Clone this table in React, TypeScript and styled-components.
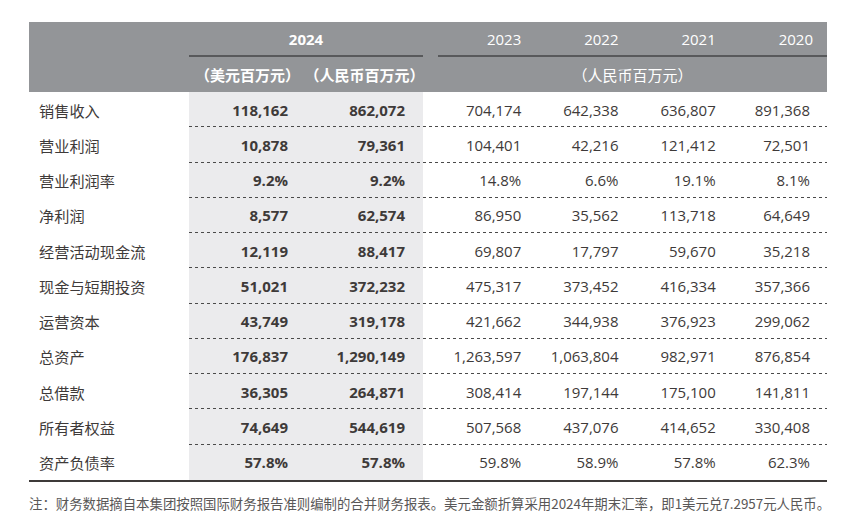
import React from 'react';
import styled, { createGlobalStyle } from 'styled-components';

const GlobalStyle = createGlobalStyle`
  html, body {
    margin: 0;
    padding: 0;
    background: #ffffff;
  }
  body {
    font-family: "Open Sans", "Noto Sans CJK SC", sans-serif;
    color: #3e3a39;
  }
`;

const COLS = '160px 117px 117px 15px repeat(4, 1fr)';

const Page = styled.div`
  padding: 22px 22px 0 29px;
  width: 798px;
`;

const HeaderBand = styled.div`
  display: grid;
  grid-template-columns: ${COLS};
  grid-template-rows: 35px 35px;
  background: #939598;
  color: #ffffff;
  font-size: 15px;
`;

const YearCell = styled.div<{ $main?: boolean; $col: string }>`
  grid-row: 1;
  grid-column: ${(p) => p.$col};
  box-sizing: border-box;
  border-bottom: 2px solid #58595b;
  display: flex;
  align-items: center;
  justify-content: ${(p) => (p.$main ? 'center' : 'flex-end')};
  padding: ${(p) => (p.$main ? '0' : '0 14px 0 0')};
  font-weight: ${(p) => (p.$main ? 700 : 400)};
  padding-top: 1px;
`;

const UnitCell = styled.div<{ $bold?: boolean; $col: string }>`
  grid-row: 2;
  grid-column: ${(p) => p.$col};
  display: flex;
  align-items: center;
  justify-content: center;
  font-family: "Noto Sans CJK SC", sans-serif;
  font-weight: ${(p) => (p.$bold ? 700 : 400)};
  white-space: nowrap;
`;

const Body = styled.div`
  border-bottom: 2px solid #3e3a39;
`;

const Row = styled.div<{ $rule: boolean }>`
  position: relative;
  display: grid;
  grid-template-columns: ${COLS};
  height: 35.25px;

  &::after {
    content: '';
    display: ${(p) => (p.$rule ? 'block' : 'none')};
    position: absolute;
    left: 160px;
    right: 0;
    bottom: 0;
    height: 1px;
    background-image: repeating-linear-gradient(
      to right,
      #4a4a4a 0 3.5px,
      transparent 3.5px 6px
    );
  }
`;

const Label = styled.div`
  display: flex;
  align-items: center;
  padding-left: 10px;
  font-family: "Noto Sans CJK SC", sans-serif;
  font-size: 15.2px;
  color: #3e3a39;
`;

const Cell = styled.div<{ $shade?: boolean; $pad?: number }>`
  display: flex;
  align-items: center;
  justify-content: flex-end;
  padding-right: ${(p) => p.$pad ?? 14}px;
  background: ${(p) => (p.$shade ? '#ebebed' : 'transparent')};
  font-size: 15px;
  font-weight: ${(p) => (p.$shade ? 700 : 400)};
  color: #3e3a39;
`;

const Note = styled.div`
  margin-top: 11px;
  font-family: "Noto Sans CJK SC", sans-serif;
  font-size: 13.4px;
  line-height: 20px;
  color: #595757;
  white-space: nowrap;
`;

type Line = [string, string, string, string, string, string, string];

const rows: Line[] = [
  ['销售收入', '118,162', '862,072', '704,174', '642,338', '636,807', '891,368'],
  ['营业利润', '10,878', '79,361', '104,401', '42,216', '121,412', '72,501'],
  ['营业利润率', '9.2%', '9.2%', '14.8%', '6.6%', '19.1%', '8.1%'],
  ['净利润', '8,577', '62,574', '86,950', '35,562', '113,718', '64,649'],
  ['经营活动现金流', '12,119', '88,417', '69,807', '17,797', '59,670', '35,218'],
  ['现金与短期投资', '51,021', '372,232', '475,317', '373,452', '416,334', '357,366'],
  ['运营资本', '43,749', '319,178', '421,662', '344,938', '376,923', '299,062'],
  ['总资产', '176,837', '1,290,149', '1,263,597', '1,063,804', '982,971', '876,854'],
  ['总借款', '36,305', '264,871', '308,414', '197,144', '175,100', '141,811'],
  ['所有者权益', '74,649', '544,619', '507,568', '437,076', '414,652', '330,408'],
  ['资产负债率', '57.8%', '57.8%', '59.8%', '58.9%', '57.8%', '62.3%'],
];

export default function App() {
  return (
    <Page>
      <GlobalStyle />
      <HeaderBand>
        <YearCell $main $col="2 / 4">2024</YearCell>
        <YearCell $col="5">2023</YearCell>
        <YearCell $col="6">2022</YearCell>
        <YearCell $col="7">2021</YearCell>
        <YearCell $col="8">2020</YearCell>
        <UnitCell $bold $col="2">（美元百万元）</UnitCell>
        <UnitCell $bold $col="3">（人民币百万元）</UnitCell>
        <UnitCell $col="5 / 9">（人民币百万元）</UnitCell>
      </HeaderBand>
      <Body>
        {rows.map((r, i) => (
          <Row key={r[0]} $rule={i < rows.length - 1}>
            <Label>{r[0]}</Label>
            <Cell $shade $pad={18}>{r[1]}</Cell>
            <Cell $shade $pad={18}>{r[2]}</Cell>
            <Cell $pad={0} />
            <Cell>{r[3]}</Cell>
            <Cell>{r[4]}</Cell>
            <Cell>{r[5]}</Cell>
            <Cell $pad={17}>{r[6]}</Cell>
          </Row>
        ))}
      </Body>
      <Note>
        注：财务数据摘自本集团按照国际财务报告准则编制的合并财务报表。美元金额折算采用2024年期末汇率，即1美元兑7.2957元人民币。
      </Note>
    </Page>
  );
}
